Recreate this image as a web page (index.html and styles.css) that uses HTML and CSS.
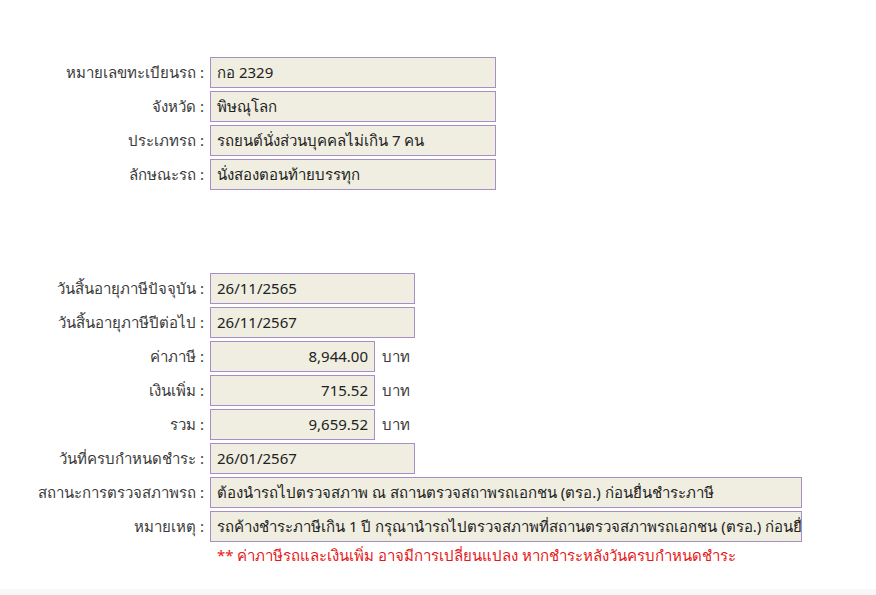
FILE: index.html
```html
<!DOCTYPE html>
<html lang="th">
<head>
  <meta charset="UTF-8">
  <meta name="viewport" content="width=device-width, initial-scale=1.0">
  <title>ข้อมูลรถ</title>
  <link rel="stylesheet" href="styles.css">
</head>
<body>

  <div class="ข้อมูล">
    <div class="กลุ่ม">
      <div class="แถว">
        <span class="ป้าย">หมายเลขทะเบียนรถ :</span>
        <span class="ช่อง กว้าง-กลาง">กอ 2329</span>
      </div>
      <div class="แถว">
        <span class="ป้าย">จังหวัด :</span>
        <span class="ช่อง กว้าง-กลาง">พิษณุโลก</span>
      </div>
      <div class="แถว">
        <span class="ป้าย">ประเภทรถ :</span>
        <span class="ช่อง กว้าง-กลาง">รถยนต์นั่งส่วนบุคคลไม่เกิน 7 คน</span>
      </div>
      <div class="แถว">
        <span class="ป้าย">ลักษณะรถ :</span>
        <span class="ช่อง กว้าง-กลาง">นั่งสองตอนท้ายบรรทุก</span>
      </div>
    </div>

    <div class="กลุ่ม กลุ่ม-ภาษี">
      <div class="แถว">
        <span class="ป้าย">วันสิ้นอายุภาษีปัจจุบัน :</span>
        <span class="ช่อง กว้าง-วันที่">26/11/2565</span>
      </div>
      <div class="แถว">
        <span class="ป้าย">วันสิ้นอายุภาษีปีต่อไป :</span>
        <span class="ช่อง กว้าง-วันที่">26/11/2567</span>
      </div>
      <div class="แถว">
        <span class="ป้าย">ค่าภาษี :</span>
        <span class="ช่อง กว้าง-เงิน">8,944.00</span>
        <span class="หน่วย">บาท</span>
      </div>
      <div class="แถว">
        <span class="ป้าย">เงินเพิ่ม :</span>
        <span class="ช่อง กว้าง-เงิน">715.52</span>
        <span class="หน่วย">บาท</span>
      </div>
      <div class="แถว">
        <span class="ป้าย">รวม :</span>
        <span class="ช่อง กว้าง-เงิน">9,659.52</span>
        <span class="หน่วย">บาท</span>
      </div>
      <div class="แถว">
        <span class="ป้าย">วันที่ครบกำหนดชำระ :</span>
        <span class="ช่อง กว้าง-วันที่">26/01/2567</span>
      </div>
      <div class="แถว">
        <span class="ป้าย">สถานะการตรวจสภาพรถ :</span>
        <span class="ช่อง กว้าง-ยาว">ต้องนำรถไปตรวจสภาพ ณ สถานตรวจสถาพรถเอกชน (ตรอ.) ก่อนยื่นชำระภาษี</span>
      </div>
      <div class="แถว">
        <span class="ป้าย">หมายเหตุ :</span>
        <span class="ช่อง กว้าง-ยาว">รถค้างชำระภาษีเกิน 1 ปี กรุณานำรถไปตรวจสภาพที่สถานตรวจสภาพรถเอกชน (ตรอ.) ก่อนยื่นชำระภาษี</span>
      </div>
      <div class="หมายเหตุ-แดง">** ค่าภาษีรถและเงินเพิ่ม อาจมีการเปลี่ยนแปลง หากชำระหลังวันครบกำหนดชำระ</div>
    </div>
  </div>

  <div class="แถบล่าง"></div>

</body>
</html>
```

FILE: styles.css
```css
body {
  margin: 0;
  font-family: "Noto Sans", "DejaVu Sans", sans-serif;
  font-size: 15px;
  color: #3a3a3a;
  background: #fff;
}

.ข้อมูล {
  box-sizing: border-box;
  height: 589px;
  padding-top: 57px;
}

.กลุ่ม {
  display: flex;
  flex-direction: column;
  gap: 3px;
}

.กลุ่ม-ภาษี {
  margin-top: 83px;
}

.แถว {
  display: flex;
  align-items: center;
  gap: 6px;
}

.ป้าย {
  width: 204px;
  text-align: right;
  white-space: nowrap;
}

.ช่อง {
  box-sizing: border-box;
  height: 31px;
  line-height: 29px;
  padding: 0 6px;
  background: #efeee1;
  border: 1px solid #a58fc4;
  color: #222;
  white-space: nowrap;
  overflow: hidden;
}

.กว้าง-กลาง {
  width: 286px;
}

.กว้าง-วันที่ {
  width: 205px;
}

.กว้าง-เงิน {
  width: 165px;
  text-align: right;
}

.กว้าง-ยาว {
  width: 592px;
}

.หน่วย {
  margin-left: 1px;
}

.หมายเหตุ-แดง {
  margin-left: 217px;
  margin-top: -1px;
  color: #e51717;
}

.แถบล่าง {
  height: 6px;
  background: #f7f7f7;
}
```
